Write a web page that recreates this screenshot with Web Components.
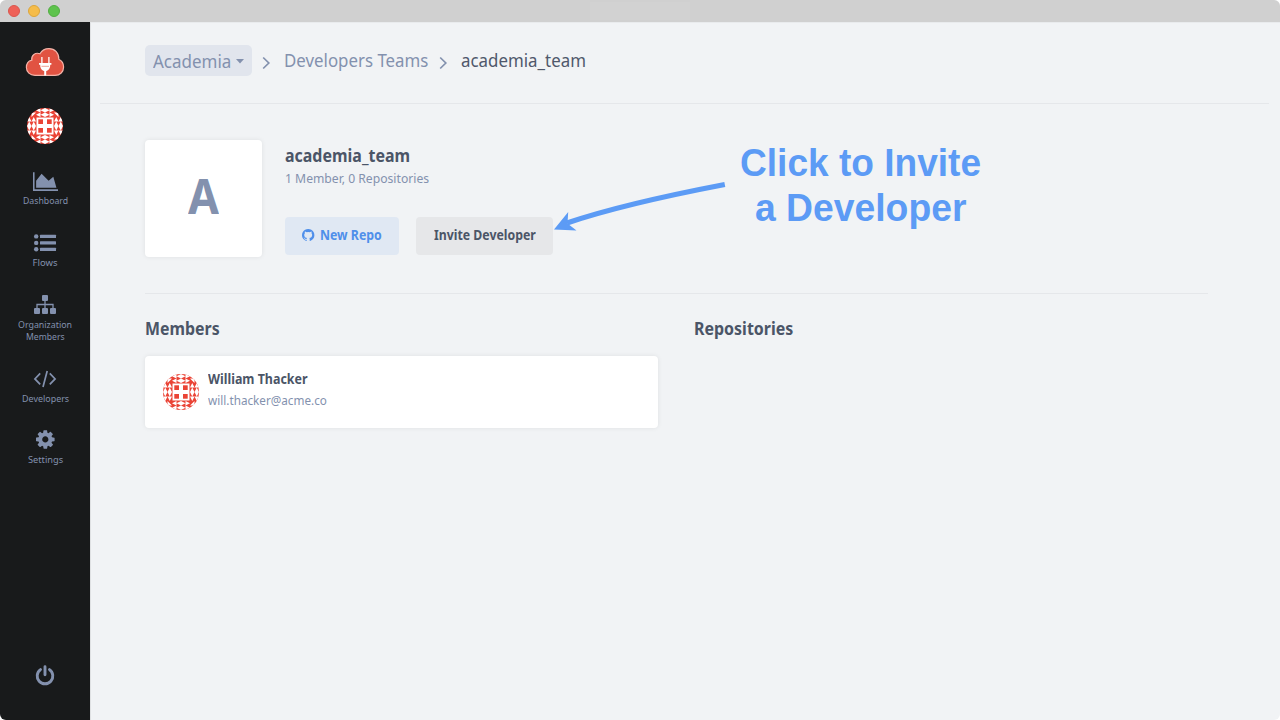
<!DOCTYPE html>
<html lang="en">
<head>
<meta charset="utf-8">
<title>academia_team</title>
<style>
html,body{margin:0;height:100%;overflow:hidden;background:#fff}
body{font-family:"Noto Sans","Open Sans",sans-serif;color:#4b5567}
</style>
</head>
<body>
<app-window></app-window>
<script>
const define = (name, html, setup) => {
  const tpl = document.createElement('template');
  tpl.innerHTML = html;
  customElements.define(name, class extends HTMLElement {
    constructor() {
      super();
      this.attachShadow({ mode: 'open' }).append(tpl.content.cloneNode(true));
    }
    connectedCallback() { if (setup) setup(this, this.shadowRoot); }
  });
};

/* Single line of text condensed to a given width */
define('fit-text', `<style>
:host{display:block;white-space:nowrap;flex:none}
span{display:inline-block;transform-origin:0 50%}
</style><span><slot></slot></span>`, (el, root) => {
  const w = +el.getAttribute('w');
  const span = root.querySelector('span');
  el.style.width = w + 'px';
  queueMicrotask(() => { span.style.transform = `scaleX(${w / span.offsetWidth})`; });
});

const icons = {
  area: ['0 0 2048 1536', 25, 19, '<path d="M2048 1408v128H0V0h128v1408zM1664 384l256 896H256V704l448-576 576 576z"/>'],
  list: ['0 0 22 18', 22, 18, '<circle cx="2.2" cy="2.4" r="2.2"/><circle cx="2.2" cy="8.9" r="2.2"/><circle cx="2.2" cy="15.2" r="2.2"/><rect x="6" y=".8" width="16" height="3.2" rx=".5"/><rect x="6" y="7.3" width="16" height="3.2" rx=".5"/><rect x="6" y="13.7" width="16" height="3.2" rx=".5"/>'],
  tree: ['0 0 22 20', 22, 20, '<rect x="8" y="0" width="6" height="6" rx="1"/><rect x="0" y="13" width="6" height="6" rx="1"/><rect x="8" y="13" width="6" height="6" rx="1"/><rect x="16" y="13" width="6" height="6" rx="1"/><path d="M11 5v9M3 14V9.500h16V14" fill="none" stroke="currentColor" stroke-width="1.3"/>'],
  code: ['0 0 22 18', 22, 18, '<path d="M6.200 3.400.9 8.900l5.300 5.500M15.800 3.400l5.300 5.500-5.300 5.500M13.200 1 9 17" fill="none" stroke="currentColor" stroke-width="1.7"/>'],
  cog: ['128 200 1536 1536', 18.6, 18.6, '<path d="M1152 896q0-106-75-181t-181-75-181 75-75 181 75 181 181 75 181-75 75-181zm512-109v222q0 12-8 23t-20 13l-185 28q-19 54-39 91 35 50 107 138 10 12 10 25t-9 23q-27 37-99 108t-94 71q-12 0-26-9l-138-108q-44 23-91 38-16 136-29 186-7 28-36 28h-222q-14 0-24.5-8.5t-11.5-21.5l-28-184q-49-16-90-37l-141 107q-10 9-25 9-14 0-25-11-126-114-165-168-7-10-7-23 0-12 8-23 15-21 51-66.5t54-70.5q-27-50-41-99l-183-27q-13-2-21-12.5t-8-23.5v-222q0-12 8-23t19-13l186-28q14-46 39-92-40-57-107-138-10-12-10-24 0-10 9-23 26-36 98.5-107.5t94.5-71.5q13 0 26 10l138 107q44-23 91-38 16-136 29-186 7-28 36-28h222q14 0 24.5 8.5t11.5 21.5l28 184q49 16 90 37l142-107q9-9 24-9 13 0 25 10 129 119 165 170 7 8 7 22 0 12-8 23-15 21-51 66.5t-54 70.5q26 50 41 98l183 28q13 2 21 12.5t8 23.5z"/>'],
  power: ['0 0 20 21', 20, 21, '<path d="M5.500 4.600a7.800 7.800 0 1 0 9 0M10 1.800v8" fill="none" stroke="currentColor" stroke-width="2.9" stroke-linecap="round"/>'],
  github: ['128 128 1536 1536', 12.4, 12.4, '<path d="M896 128q209 0 385.500 103t279.500 279.500 103 385.500q0 251-146.500 451.500t-378.500 277.500q-27 5-40-7t-13-30q0-3 .5-76.500t.5-134.500q0-97-52-142 57-6 102.500-18t94-39 81-66.500 53-105 20.500-150.500q0-119-79-206 37-91-8-204-28-9-81 11t-92 44l-38 24q-93-26-192-26t-192 26q-16-11-42.500-27t-83.500-38.500-85-13.500q-45 113-8 204-79 87-79 206 0 85 20.500 150t52.500 105 80.500 67 94 39 102.500 18q-39 36-49 103-21 10-45 15t-57 5-65.500-21.500-55.500-62.500q-19-32-48.500-52t-49.500-24l-20-3q-21 0-29 4.500t-5 11.500 9 14 13 12l7 5q22 10 43.500 38t31.500 51l10 23q13 38 44 61.500t67 30 69.500 7 55.500-3.500l23-4q0 38 .5 88.500t.5 54.500q0 18-13 30t-40 7q-232-77-378.500-277.500t-146.500-451.500q0-209 103-385.500t279.500-279.500 385.500-103z"/>'],
  chevron: ['0 0 8 14', 8, 14, '<path d="M1.200 1.500 6.800 7l-5.600 5.500" fill="none" stroke="currentColor" stroke-width="1.7"/>'],
  caret: ['0 0 8 5', 8, 5, '<path d="M0 0h8L4 4.600z"/>'],
  logo: ['0 0 40 30', 40, 30, '<path d="M10 28.400C5 28.400 1.400 25 1.400 20.600c0-4 2.400-6.700 5.400-7.400C6 8.200 10.500 5 15 6.800 17 3.300 20.500 1.700 24 1.700c6 0 10 4.500 9.800 10.500 3 1.500 4.800 4.400 4.800 7.800 0 4.800-3.500 8.400-8.600 8.400z" fill="#e15342" stroke="#f5b3a8" stroke-width="1.2"/><path d="M14 16h12.400v1.700h-1.200c0 4-1.600 5.600-4 6.200V28.400h-2v-4.500c-2.400-.6-4-2.200-4-6.200H14z" fill="#fff"/><path d="M16.900 10v6.500M23.900 10v6.500" stroke="#fff" stroke-width="1.300"/><path d="M16.500 19.400h7.500" stroke="#efb5ac" stroke-width="1.200"/>'],
};
define('ui-icon', `<style>:host{display:block;flex:none}svg{display:block;fill:currentColor;overflow:visible}</style><div></div>`, (el, root) => {
  const [vb, w, h, body] = icons[el.getAttribute('name')];
  root.querySelector('div').innerHTML = `<svg width="${w}" height="${h}" viewBox="${vb}">${body}</svg>`;
});

/* Quilt-style avatar: a rim of triangles round four squares, one quadrant turned four times */
define('quilt-avatar', `<style>
:host{display:block;width:36px;height:36px;border-radius:50%;overflow:hidden;background:#ea4335;flex:none}
svg{display:block}
</style><svg width="36" height="36" viewBox="0 0 36 36" fill="#fff"><defs>
<g id="q">
<path d="M9 2.250 13.500 0v4.500zM13.500 2.250 18 0v4.500zM9 6.750l4.500-2.250V9zM13.500 6.750 18 4.500V9z"/>
<path d="M2.250 9 4.500 13.500H0zM2.250 13.500 4.500 18H0zM6.750 9 9 13.500H4.500zM6.750 13.500 9 18H4.500z"/>
<path d="M4.500 4.500H9L4.500 9zM0 9l4.500-4.500V0L0 4.500zM4.500 4.500 9 0H4.500z"/>
<path d="M9.500 9.500H18V18H9.500z"/>
<rect x="11.300" y="11.300" width="4.700" height="4.700" fill="#ea4335"/>
</g></defs>
<use href="#q"/><use href="#q" transform="rotate(90 18 18)"/><use href="#q" transform="rotate(180 18 18)"/><use href="#q" transform="rotate(270 18 18)"/></svg>`);

define('title-bar', `<style>
:host{display:flex;align-items:center;height:22px;background:#d0d0d0;padding-left:8px;gap:8px;flex:none}
i{width:12px;height:12px;border-radius:50%;box-sizing:border-box}
.r{background:#ee6158;border:.5px solid #d9564e}.y{background:#f5bc4a;border:.5px solid #dca53b}.g{background:#5ec34d;border:.5px solid #52ad42}
b{width:100px;height:18px;margin-left:522px;background:#d2d2d2}
</style><i class="r"></i><i class="y"></i><i class="g"></i><b></b>`);

define('nav-item', `<style>
:host{display:flex;flex-direction:column;align-items:center;color:#8391ae}
.i{height:20px;margin-bottom:4px;display:flex;align-items:center}
.l{font-size:9.500px;line-height:12px;display:flex;flex-direction:column;align-items:center}
</style><div class="i"></div><div class="l"><slot></slot></div>`, (el, root) => {
  const icon = document.createElement('ui-icon');
  icon.setAttribute('name', el.getAttribute('icon'));
  root.querySelector('.i').replaceChildren(icon);
});

define('side-bar', `<style>
:host{display:flex;flex-direction:column;align-items:center;width:90px;box-sizing:border-box;background:#181a1b;padding:25px 0 34px;flex:none;color:#8391ae}
quilt-avatar{margin:31px 0 27px}
nav{display:flex;flex-direction:column;gap:26px}
nav-item:last-child{margin-top:-1px}
.power{margin-top:auto}
</style>
<ui-icon name="logo"></ui-icon>
<quilt-avatar></quilt-avatar>
<nav>
<nav-item icon="area"><fit-text w="45">Dashboard</fit-text></nav-item>
<nav-item icon="list"><fit-text w="25">Flows</fit-text></nav-item>
<nav-item icon="tree"><fit-text w="54">Organization</fit-text><fit-text w="39">Members</fit-text></nav-item>
<nav-item icon="code"><fit-text w="47">Developers</fit-text></nav-item>
<nav-item icon="cog"><fit-text w="35">Settings</fit-text></nav-item>
</nav>
<ui-icon class="power" name="power"></ui-icon>`);

define('bread-crumbs', `<style>
:host{display:flex;align-items:flex-start;height:81px;box-sizing:border-box;margin:0 11px 0 10px;padding:22px 0 0 45px;border-bottom:1px solid #e5e7ea;font-size:18.500px;line-height:29px;color:#8391ae}
.pick{display:flex;align-items:center;height:31px;width:107px;box-sizing:border-box;padding-left:8px;gap:5px;border-radius:5px;background:#e1e5ed;margin-right:10px}
.pick fit-text{margin-top:-1px}
.pick ui-icon{margin-top:2px}
.c1,.c2{margin:11px 14px 0 0}.c2{margin-left:11px}
.now{color:#4f586b}
</style>
<div class="pick"><fit-text w="78">Academia</fit-text><ui-icon name="caret"></ui-icon></div>
<ui-icon class="c1" name="chevron"></ui-icon>
<fit-text w="144">Developers Teams</fit-text>
<ui-icon class="c2" name="chevron"></ui-icon>
<fit-text class="now" w="125">academia_team</fit-text>`);

define('action-button', `<style>
:host{display:flex;align-items:center;justify-content:center;gap:5px;height:38px;box-sizing:border-box;border-radius:4px;font-size:13.500px;font-weight:700;line-height:37px;padding-bottom:1px;background:#e6e7e9;color:#4b5567}
:host([primary]){background:#e0e8f3;color:#4f8fea}
</style><slot></slot>`);

define('team-header', `<style>
:host{display:flex;height:154px;box-sizing:border-box;border-bottom:1px solid #e5e7ea;margin-right:72px}
.tile{width:117px;height:117px;border-radius:4px;background:#fff;box-shadow:0 0 5px rgba(0,0,0,.08);display:flex;align-items:center;justify-content:center;font-size:49px;font-weight:700;line-height:60px;color:#8391ae;flex:none;box-sizing:border-box;padding-bottom:7px}
.info{margin-left:22.500px;display:flex;flex-direction:column}
.name{font-size:17.500px;font-weight:700;line-height:24px;margin-top:3px}
.meta{font-size:13px;line-height:20px;color:#8391ae;margin-top:1px}
.row{display:flex;gap:17px;margin:29px 0 0 .5px}
.a{width:114px}.b{width:137px}
</style>
<div class="tile"><fit-text w="31">A</fit-text></div>
<div class="info">
<fit-text class="name" w="125">academia_team</fit-text>
<fit-text class="meta" w="144">1 Member, 0 Repositories</fit-text>
<div class="row"><action-button class="a" primary><ui-icon name="github"></ui-icon><fit-text w="62">New Repo</fit-text></action-button><action-button class="b"><fit-text w="102">Invite Developer</fit-text></action-button></div>
</div>`);

define('member-card', `<style>
:host{display:flex;align-items:center;height:72px;width:513px;box-sizing:border-box;border-radius:4px;background:#fff;box-shadow:0 0 5px rgba(0,0,0,.08);padding-left:18px;gap:9px}
.t{display:flex;flex-direction:column;gap:2px;margin-top:-5px}
.n{font-size:13.500px;font-weight:700;line-height:20px}
.e{font-size:12.500px;line-height:20px;color:#8391ae}
</style>
<quilt-avatar></quilt-avatar>
<div class="t"><fit-text class="n" w="99.500">William Thacker</fit-text><fit-text class="e" w="119">will.thacker@acme.co</fit-text></div>`);

define('team-columns', `<style>
:host{display:grid;grid-template-columns:513px 1fr;gap:36px;padding-top:22px}
.h{font-size:17.500px;line-height:24px;font-weight:700;margin-bottom:16px}
</style>
<section><fit-text class="h" w="74.500">Members</fit-text><member-card></member-card></section>
<section><fit-text class="h" w="99.500">Repositories</fit-text></section>`);

/* Callout overlay: arrow and caption above the page */
define('hint-callout', `<style>
:host{position:absolute;left:550px;top:139px;width:440px;height:96px;pointer-events:none;color:#5c9bf5}
svg{position:absolute;left:0;top:0}
.t{position:absolute;left:190px;top:2px;width:240px;display:flex;flex-direction:column;align-items:center;font:700 38px/45px "Liberation Sans",sans-serif}
</style>
<svg width="180" height="96" viewBox="0 0 180 96"><path d="M174.800 45.500C120 56 61 69 17 84" fill="none" stroke="currentColor" stroke-width="5.200"/><path d="M4 90.500 18.200 73 17.500 84.500 26.500 91.500z" fill="currentColor"/></svg>
<div class="t"><fit-text w="241">Click to Invite</fit-text><fit-text w="211">a Developer</fit-text></div>`);

define('app-window', `<style>
:host{display:flex;flex-direction:column;width:1280px;height:720px;overflow:hidden;border-radius:6px;background:#f1f3f5;position:relative}
.body{display:flex;flex:1;min-height:0}
main{flex:1;min-width:0;border-top:1px solid #e9ebed;border-left:1px solid #dfe1e3;box-sizing:border-box}
bread-crumbs{margin-left:9px}
.content{padding:36px 0 0 54px}
</style>
<title-bar></title-bar>
<div class="body"><side-bar></side-bar><main><bread-crumbs></bread-crumbs><div class="content"><team-header></team-header><team-columns></team-columns></div></main></div>
<hint-callout></hint-callout>`);
</script>
</body>
</html>
